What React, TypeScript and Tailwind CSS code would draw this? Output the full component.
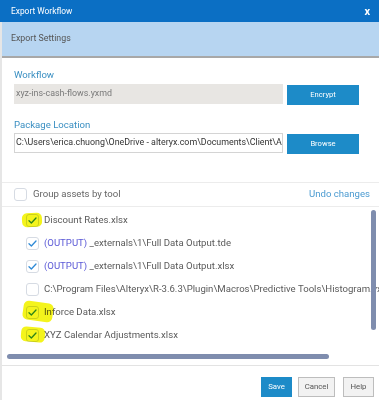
import React from "react";

type Asset = {
  label: string;
  output?: boolean;
  checked: boolean;
  highlight?: string;
};

const ASSETS: Asset[] = [
  { label: "Discount Rates.xlsx", checked: true, highlight: "w-[20px] h-[14px] left-[20px] top-[4px] rotate-[-4deg]" },
  { label: "_externals\\1\\Full Data Output.tde", output: true, checked: true },
  { label: "_externals\\1\\Full Data Output.xlsx", output: true, checked: true },
  {
    label: "C:\\Program Files\\Alteryx\\R-3.6.3\\Plugin\\Macros\\Predictive Tools\\Histogram.yxmc",
    checked: false,
  },
  { label: "Inforce Data.xlsx", checked: true, highlight: "w-[30px] h-[19px] left-[21px] top-[1px] rotate-[8deg]" },
  { label: "XYZ Calendar Adjustments.xlsx", checked: true, highlight: "w-[24px] h-[15px] left-[19px] top-[3px] rotate-[5deg]" },
];

function Check({ checked }: { checked: boolean }) {
  return (
    <span className="flex h-[13px] w-[13px] shrink-0 items-center justify-center rounded-[3px] border border-[#d6dbe3] bg-white">
      {checked ? (
        <svg width="9" height="7" viewBox="0 0 10 8" fill="none">
          <path d="M1 4.2 3.7 6.8 9 1.2" stroke="#2f8ad6" strokeWidth="1.5" strokeLinecap="round" strokeLinejoin="round" />
        </svg>
      ) : null}
    </span>
  );
}

function AssetRow({ asset }: { asset: Asset }) {
  return (
    <div className="relative flex h-[23px] items-center gap-[5px] pl-[24px] whitespace-nowrap">
      <Check checked={asset.checked} />
      <span className="text-[9.6px] text-[#5a5a5a]">
        {asset.output ? <span className="text-[#5a58d6]">(OUTPUT) </span> : null}
        {asset.label}
      </span>
      {asset.highlight ? (
        <span className={`pointer-events-none absolute rounded-[5px] bg-[#f4f41c] mix-blend-multiply ${asset.highlight}`} />
      ) : null}
    </div>
  );
}

function BlueButton({ children }: { children: React.ReactNode }) {
  return (
    <button className="mt-[1px] block h-[20px] w-[72px] shrink-0 bg-[#1d8bc8] text-[7.6px] text-white">
      {children}
    </button>
  );
}

export default function App() {
  return (
    <div className="h-[400px] w-[379px] overflow-hidden bg-white" style={{ fontFamily: "Roboto, \"Open Sans\", sans-serif" }}>
      <div className="flex h-[22px] items-center justify-between bg-[#0b6fc4] pl-[11px] pr-[9px] text-white">
        <span className="text-[8.4px]">Export Workflow</span>
        <span className="text-[11px] font-bold leading-none">x</span>
      </div>
      <div className="flex h-[378px] flex-col border-l-2 border-[#e6e6e6]">
        <div className="flex h-[36px] shrink-0 items-center border-b-2 border-[#a8a8a8] bg-[#b7d5f1] pl-[9px] text-[8.8px] text-[#555]">
          Export Settings
        </div>

        <div className="flex flex-col pl-[12px] pr-[20px] pt-[10px]">
          <label className="text-[9.6px] leading-[14px] text-[#3a8fc2]">Workflow</label>
          <div className="mt-[2px] flex items-start gap-[4px]">
            <div className="flex h-[20px] flex-1 items-center bg-[#e8e6e3] pl-[2px] text-[8.9px] text-[#7a7a7a]">
              xyz-ins-cash-flows.yxmd
            </div>
            <BlueButton>Encrypt</BlueButton>
          </div>

          <label className="mt-[13px] text-[9.6px] leading-[14px] text-[#3a8fc2]">Package Location</label>
          <div className="mt-[1px] flex items-start gap-[4px]">
            <div className="flex h-[20px] min-w-0 flex-1 items-center overflow-hidden whitespace-nowrap border border-[#d4d4d4] pl-[1px] text-[8.9px] text-[#333]">
              C:\Users\erica.chuong\OneDrive - alteryx.com\Documents\Client\A&amp;E
            </div>
            <BlueButton>Browse</BlueButton>
          </div>
        </div>

        <div className="mt-[28px] shrink-0 border-t border-[#ececec]" />
        <div className="flex h-[24px] shrink-0 items-center justify-between border-b border-[#ececec] pl-[12px] pr-[9px]">
          <div className="flex items-center gap-[6px]">
            <Check checked={false} />
            <span className="text-[9.6px] text-[#666]">Group assets by tool</span>
          </div>
          <span className="text-[9.6px] text-[#4b9bd1]">Undo changes</span>
        </div>

        <div className="relative h-[158px] shrink-0 overflow-hidden">
          <div className="pr-[8px] pt-[2px]">
            {ASSETS.map((a) => (
              <AssetRow key={a.label} asset={a} />
            ))}
          </div>
          <div className="absolute right-[3px] top-[3px] h-[120px] w-[5px] rounded-full bg-[#7f8dae]" />
          <div className="absolute bottom-[6px] left-[5px] h-[5px] w-[322px] rounded-full bg-[#7f8dae]" />
        </div>

        <div className="shrink-0 border-t border-[#e3e3e3]" />
        <div className="flex flex-1 items-start justify-end pr-[5px] pt-[11px]">
          <button className="block h-[20px] w-[31px] bg-[#1d8bc8] text-[7.8px] text-white">Save</button>
          <button className="ml-[6px] block h-[20px] w-[37px] border border-[#bdbdbd] bg-[#f2f2f2] text-[7.8px] text-[#555]">Cancel</button>
          <button className="ml-[8px] block h-[20px] w-[31px] border border-[#bdbdbd] bg-[#f2f2f2] text-[7.8px] text-[#555]">Help</button>
        </div>
      </div>
    </div>
  );
}
